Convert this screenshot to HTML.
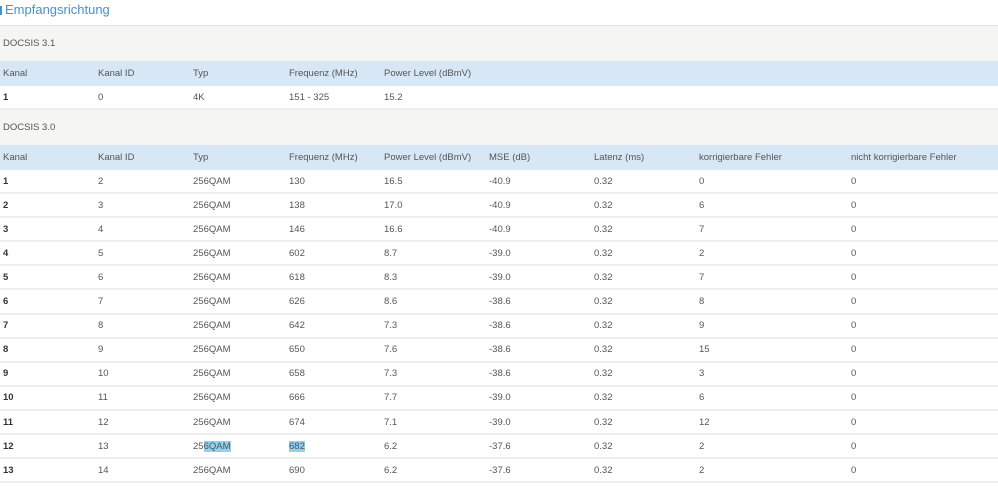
<!DOCTYPE html>
<html><head><meta charset="utf-8"><style>
*{margin:0;padding:0;box-sizing:border-box}
body{width:998px;height:486px;background:#fff;font-family:"Liberation Sans",sans-serif;font-size:9.5px;color:#555;position:relative;overflow:hidden}
.title{position:absolute;left:0;top:2px;font-size:13px;color:#4a8fd6}
.title i{display:inline-block;width:2px;height:9px;background:#4a8fd6;margin-right:3px;vertical-align:-1px}
.row{position:absolute;left:0;width:998px;display:flex;align-items:center}
.sec{background:#f5f5f4;height:35px;padding-left:3px}
.hd{background:#d7e7f5;height:25px}
.dt{background:#fff;height:24px;border-bottom:2px solid #eeeeee}
.row span{position:absolute}
.sel{background:#8fd0f3}
</style></head><body>
<div class="title"><i></i>Empfangsrichtung</div>
<div style="position:absolute;left:0;top:25px;width:998px;height:1px;background:#e2e2e2"></div>
<div id="c"></div>
<script>
var X=[3,98,193,289,384,489,594,699,851];
var h='';
function row(cls,top,cells){h+='<div class="row '+cls+'" style="top:'+top+'px">';cells.forEach(function(c,i){h+='<span style="left:'+X[i]+'px">'+c+'</span>'});h+='</div>';}
h+='<div class="row sec" style="top:26px">DOCSIS 3.1</div>';
row('hd',61,['Kanal','Kanal ID','Typ','Frequenz (MHz)','Power Level (dBmV)']);
row('dt',86,['<b style="color:#333">1</b>','0','4K','151 - 325','15.2']);
h+='<div class="row sec" style="top:110px">DOCSIS 3.0</div>';
row('hd',145,['Kanal','Kanal ID','Typ','Frequenz (MHz)','Power Level (dBmV)','MSE (dB)','Latenz (ms)','korrigierbare Fehler','nicht korrigierbare Fehler']);
var d=[[2,130,'16.5','-40.9',0],[3,138,'17.0','-40.9',6],[4,146,'16.6','-40.9',7],[5,602,'8.7','-39.0',2],[6,618,'8.3','-39.0',7],[7,626,'8.6','-38.6',8],[8,642,'7.3','-38.6',9],[9,650,'7.6','-38.6',15],[10,658,'7.3','-38.6',3],[11,666,'7.7','-39.0',6],[12,674,'7.1','-39.0',12],[13,682,'6.2','-37.6',2],[14,690,'6.2','-37.6',2]];
d.forEach(function(r,i){
 var typ='256QAM',fr=r[1];
 if(i==11){typ='25<span class="sel" style="position:static">6QAM</span>';fr='<span class="sel" style="position:static">682</span>';}
 row('dt',170+i*24.1,['<b style="color:#333">'+(i+1)+'</b>',r[0],typ,fr,r[2],r[3],'0.32',r[4],'0']);
});
document.getElementById('c').innerHTML=h;
</script>
</body></html>
